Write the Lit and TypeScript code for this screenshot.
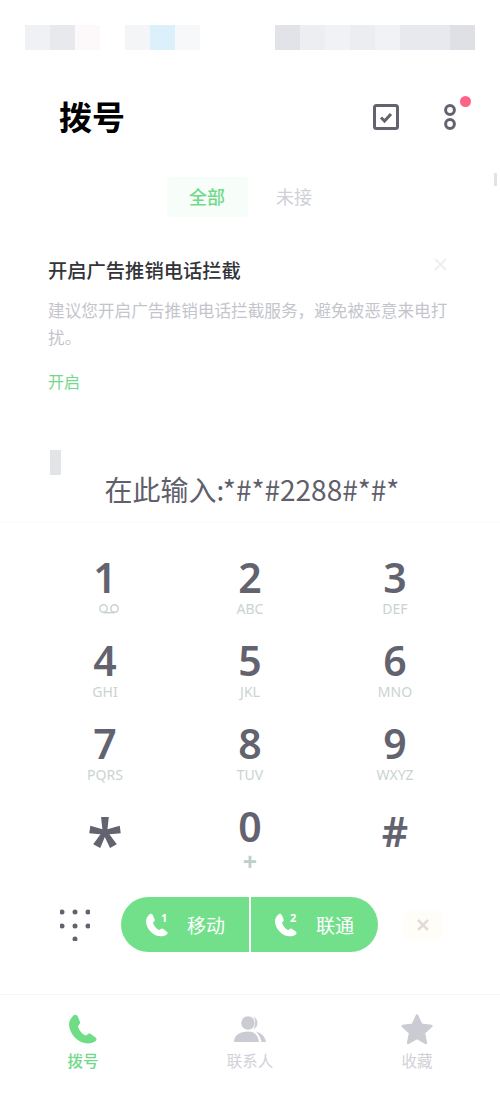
import { LitElement, html, css, svg, unsafeCSS } from "lit";
import { customElement } from "lit/decorators.js";

const CJK = unsafeCSS(`"Noto Sans CJK SC", "Noto Sans", sans-serif`);
const HANDSET = "M4 2C5.5 0 8 .5 9 3l2 5c.5 2-1.5 3-2 4.500 1 3.500 4 7.500 7.500 9 1.500 0 2.500-2.500 4.500-2l5 3.500c2 1.500 2 3 0 4.500-4 2.500-9 2.500-14 .5C4 24 0 16 0 10c0-3 2-6 4-8z";

const cells: [number, string][] = [
  [25, "transparent"], [25, "#f0f1f4"], [25, "#e8e9ed"], [25, "#fdf9fa"], [25, "transparent"],
  [25, "#f4f5f7"], [25, "#dcf0fb"], [25, "#f7f8fa"], [75, "transparent"],
  [25, "#e2e3e8"], [25, "#eceef1"], [25, "#f1f2f5"], [25, "#ebedf1"], [25, "#f1f2f5"],
  [50, "#e8e9ee"], [25, "#dfe0e5"],
];

const keys: [string, string][] = [
  ["1", ""], ["2", "ABC"], ["3", "DEF"],
  ["4", "GHI"], ["5", "JKL"], ["6", "MNO"],
  ["7", "PQRS"], ["8", "TUV"], ["9", "WXYZ"],
  ["*", ""], ["0", "+"], ["#", ""],
];

@customElement("app-root")
export class AppRoot extends LitElement {
  static styles = css`
    :host { display: block; width: 500px; height: 1097px; background: #fff; position: relative; overflow: hidden;
      font-family: ${CJK}; }
    .status { display: flex; height: 25px; padding-top: 25px; }
    .status span { display: block; height: 25px; }
    .header { display: flex; align-items: center; height: 64px; margin-top: 35px; padding: 0 37px 0 59px; }
    .header h1 { margin: -3px 0 0; font-size: 33px; font-weight: 700; color: #000; line-height: 40px; flex: 1; }
    .check { width: 26px; height: 26px; display: block; margin-right: 38px; }
    .more { position: relative; width: 26px; height: 36px; display: flex; justify-content: center; }
    .more svg { display: block; width: 14px; height: 28px; margin-top: 4px; }
    .badge { position: absolute; top: -3px; right: -8px; width: 11px; height: 11px; border-radius: 50%; background: #fb6484; }
    .tabs { display: flex; padding-left: 167px; margin-top: 28px; align-items: center; }
    .tab { height: 40px; line-height: 38px; font-size: 18px; color: #d0d1d6; padding-left: 28px; }
    .tab.on { width: 81px; box-sizing: border-box; padding: 0 1px 0 0; text-align: center; background: #f7fdf9; color: #72d98a; border-radius: 4px; font-weight: 500; }
    .notice { position: relative; padding: 0 48px; margin-top: 39px; }
    .notice h2 { margin: 0; font-size: 19.300px; font-weight: 500; color: #33343a; line-height: 28px; }
    .notice p { margin: 13px 0 0; font-size: 16.650px; line-height: 27px; color: #c4c5cc; }
    .notice a { display: block; margin-top: 18px; font-size: 16px; line-height: 24px; color: #72d98a; }
    .close { position: absolute; right: 53px; top: 2px; width: 13px; height: 13px; display: block; }
    .cursor { width: 11px; height: 25px; margin: 57px 0 0 50px; background: #e3e4e8; }
    .input { text-align: center; font-size: 28px; line-height: 36px; color: #5f606b; height: 36px; margin-top: -4px; padding-left: 4px; }
    .sep { height: 1px; margin-top: 15px; background: #fbfbfc; }
    .pad { display: grid; grid-template-columns: repeat(3, 145px); justify-content: center; grid-auto-rows: 83px; margin-top: 29px; }
    .key { position: relative; display: flex; flex-direction: column; align-items: center; }
    .digit { font-family: "Noto Sans", sans-serif; font-size: 41px; font-weight: 600; line-height: 44px; color: #62636f; height: 44px; margin-top: 3px; }
    .digit.star { font-size: 66px; margin-top: 19px; }
    .digit.hash { margin-top: 8px; }
    .sub { font-family: "Noto Sans", sans-serif; font-size: 14px; line-height: 18px; height: 18px; color: #c9d4d0; margin-top: 1px; }
    .sub.plus { font-size: 25px; line-height: 20px; font-weight: 700; margin-top: 3px; color: #bcd0c9; }
    .vm { width: 22px; height: 10px; display: block; margin: 5px 0 0 7px; }
    .actions { display: flex; align-items: center; height: 55px; margin-top: 13px; padding-left: 60px; }
    .dots { width: 30px; height: 32px; display: block; margin-right: 31px; }
    .call { display: flex; width: 257px; height: 55px; border-radius: 28px; background: #72e08a; overflow: hidden; }
    .line { flex: 1; display: flex; align-items: center; color: #fff; font-size: 19px; }
    .line:first-child { padding-left: 25px; border-right: 2px solid #fff; }
    .line:last-child { padding-left: 24px; }
    .line svg { width: 22px; height: 24px; display: block; }
    .line sup { font-family: "Noto Sans", sans-serif; font-size: 11px; font-weight: 700; line-height: 11px; width: 8px; align-self: flex-start; margin: 15px 0 0 -7px; }
    .line b { font-weight: 400; margin-left: 18px; }
    .del { width: 40px; height: 28px; margin-left: 25px; background: #fffdf8; display: flex; align-items: center; justify-content: center; border-radius: 6px; }
    .del svg { width: 12px; height: 12px; display: block; }
    .nav { display: grid; grid-template-columns: 166px 168px 166px; margin-top: 42px; border-top: 1px solid #f6f6f8; height: 102px; }
    .item { display: flex; flex-direction: column; align-items: center; font-size: 15.500px; color: #d0d1d6; }
    .item.on { color: #72d98a; font-weight: 500; }
    .item svg { width: 34px; height: 32px; display: block; margin-top: 18px; }
    .item span { line-height: 24px; margin-top: 3px; }
    .scroll { position: absolute; left: 494px; top: 173px; width: 3px; height: 13px; background: #e2e3e6; }
  `;

  private key(d: string, s: string) {
    const cls = d === "*" ? "digit star" : d === "#" ? "digit hash" : "digit";
    return html`<div class="key">
      <div class=${cls}>${d}</div>
      ${d === "1"
        ? html`<svg class="vm" viewBox="0 0 22 10" fill="none" stroke="#c9d4d0" stroke-width="1.500"><circle cx="5.500" cy="4.500" r="3.700"/><circle cx="16.500" cy="4.500" r="3.700"/><path d="M5.500 8.700h11"/></svg>`
        : s ? html`<div class=${s === "+" ? "sub plus" : "sub"}>${s}</div>` : ""}
    </div>`;
  }

  private handset(color: string) {
    return svg`<path d=${HANDSET} fill=${color}/>`;
  }

  render() {
    return html`
      <div class="status">${cells.map(([w, c]) => html`<span style="width:${w}px;background:${c}"></span>`)}</div>
      <div class="header">
        <h1>拨号</h1>
        <svg class="check" viewBox="0 0 26 26" fill="none" stroke="#62636f"><rect x="1.500" y="1.500" width="23" height="23" rx="2" stroke-width="3"/><path d="M8 13.500l3.500 3.500 6.500-7" stroke-width="3"/></svg>
        <div class="more">
          <svg viewBox="0 0 14 28" fill="none" stroke="#62636f" stroke-width="3"><circle cx="7" cy="7" r="4.400"/><circle cx="7" cy="21" r="4.400"/></svg>
          <i class="badge"></i>
        </div>
      </div>
      <div class="tabs"><div class="tab on">全部</div><div class="tab">未接</div></div>
      <div class="notice">
        <h2>开启广告推销电话拦截</h2>
        <svg class="close" viewBox="0 0 13 13" stroke="#eceef0" stroke-width="1.800"><path d="M1 1l11 11M12 1L1 12"/></svg>
        <p>建议您开启广告推销电话拦截服务，避免被恶意来电打扰。</p>
        <a>开启</a>
      </div>
      <div class="cursor"></div>
      <div class="input">在此输入:*#*#2288#*#*</div>
      <div class="sep"></div>
      <div class="pad">${keys.map(([d, s]) => this.key(d, s))}</div>
      <div class="actions">
        <svg class="dots" viewBox="0 0 30 32" fill="#62636f">
          ${[[2, 3], [15, 3], [28, 3], [2, 17], [15, 17], [28, 17], [15, 30]].map(([x, y]) => svg`<circle cx=${x} cy=${y} r="2.500"/>`)}
        </svg>
        <div class="call">
          <div class="line"><svg viewBox="0 0 28 30">${this.handset("#fff")}</svg><sup>1</sup><b>移动</b></div>
          <div class="line"><svg viewBox="0 0 28 30">${this.handset("#fff")}</svg><sup>2</sup><b>联通</b></div>
        </div>
        <div class="del"><svg viewBox="0 0 12 12" stroke="#e3dcd5" stroke-width="2.600"><path d="M1 1l10 10M11 1L1 11"/></svg></div>
      </div>
      <div class="nav">
        <div class="item on"><svg viewBox="-3 -1 34 32">${this.handset("#6fdc86")}</svg><span>拨号</span></div>
        <div class="item"><svg viewBox="0 0 34 32" fill="#cbccd3"><circle cx="15" cy="10" r="6.800"/><path d="M20 3.500a7 7 0 0 1 0 13c3 -2 3-11 0-13zM1 29c0-7 6-10.500 14-10.500 7 0 10 4 11 10.500z"/><path d="M23 18.500c4 1 9 4 10 10.500h-4.500c-1-4.500-3-8-5.500-10.500z"/></svg><span>联系人</span></div>
        <div class="item"><svg viewBox="0 0 34 32" fill="#cbccd3" stroke="#cbccd3" stroke-width="2.500" stroke-linejoin="round"><path d="M17 2.500l4.300 9.300 10 1.200-7.400 6.900 2 10-8.900-5-8.900 5 2-10-7.400-6.900 10-1.200z"/></svg><span>收藏</span></div>
      </div>
      <div class="scroll"></div>
    `;
  }
}
